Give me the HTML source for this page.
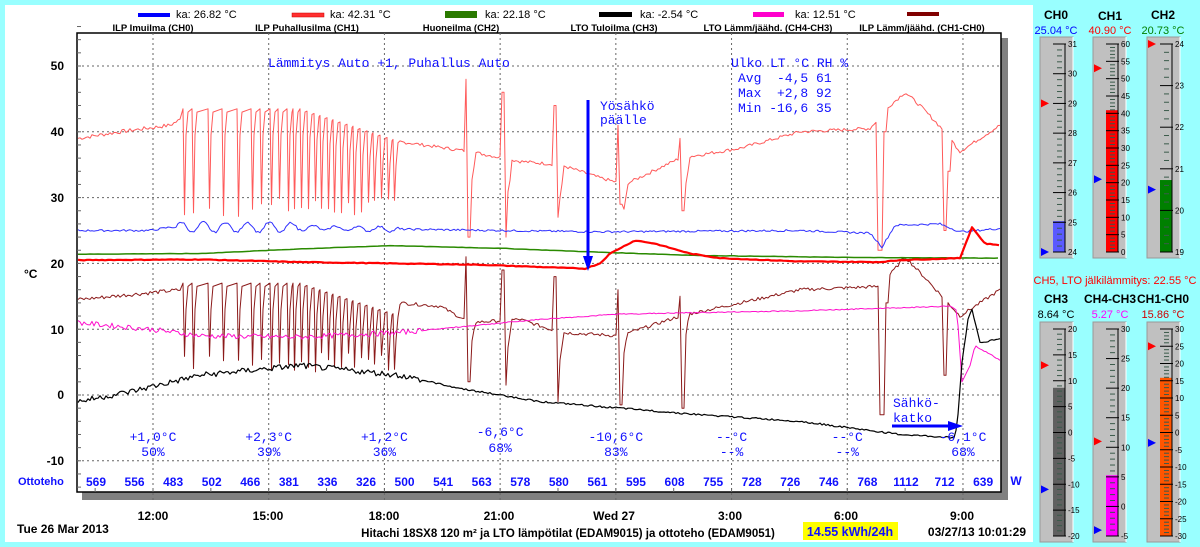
<!DOCTYPE html>
<html><head><meta charset="utf-8">
<style>
html,body{margin:0;padding:0;background:#99ffff;width:1200px;height:547px;overflow:hidden}
svg{display:block}
text{font-family:"Liberation Sans",Arial,sans-serif}
.m,.m text{font-family:"Liberation Mono","DejaVu Sans Mono",monospace;fill:#1010ff;font-size:13px}
</style></head><body>
<svg id="s" width="1200" height="547" xmlns="http://www.w3.org/2000/svg">
<rect x="0" y="0" width="1200" height="547" fill="#99ffff"/>
<rect x="5" y="5" width="1028" height="537" fill="#fff"/>
<rect x="1001" y="38" width="7" height="462" fill="#808080"/>
<rect x="82" y="492" width="926" height="8" fill="#808080"/>
<rect x="77" y="33" width="924" height="459" fill="#fff" stroke="#000" stroke-width="1.5"/>
<g id="grid"></g>
<g id="curves" fill="none"></g>
<g font-size="11">
<rect x="138" y="13" width="32" height="4" fill="#0000ff"/><text x="176" y="18">ka: 26.82 °C</text>
<rect x="292" y="13" width="32" height="4" fill="#ff3030" stroke="#c00" stroke-width="0.5"/><text x="330" y="18">ka: 42.31 °C</text>
<rect x="445" y="11" width="32" height="7" fill="#2a7a00"/><text x="485" y="18">ka: 22.18 °C</text>
<rect x="599" y="12" width="33" height="5" fill="#000"/><text x="640" y="18">ka: -2.54 °C</text>
<rect x="753" y="12" width="31" height="5" fill="#ff00cc"/><text x="795" y="18">ka: 12.51 °C</text>
<rect x="907" y="12" width="32" height="4" fill="#800000"/>
</g>
<g font-size="9.5" font-weight="bold" text-anchor="middle">
<text x="153" y="31">ILP Imuilma (CH0)</text>
<text x="307" y="31">ILP Puhallusilma (CH1)</text>
<text x="461" y="31">Huoneilma (CH2)</text>
<text x="614" y="31">LTO Tuloilma (CH3)</text>
<text x="768" y="31">LTO Lämm/jäähd. (CH4-CH3)</text>
<text x="922" y="31">ILP Lämm/jäähd. (CH1-CH0)</text>
</g>
<g font-size="12" font-weight="bold" text-anchor="end">
<text x="64" y="70">50</text><text x="64" y="136">40</text><text x="64" y="202">30</text>
<text x="64" y="268">20</text><text x="64" y="334">10</text><text x="64" y="399">0</text><text x="64" y="465">-10</text>
</g>
<text x="24" y="278" font-size="12" font-weight="bold">°C</text>
<text class="m" x="268" y="67">Lämmitys Auto +1, Puhallus Auto</text>
<text class="m" x="731" y="67" font-size="12">Ulko LT °C RH %</text>
<text class="m" x="738" y="82" font-size="12" xml:space="preserve">Avg  -4,5 61</text>
<text class="m" x="738" y="97" font-size="12" xml:space="preserve">Max  +2,8 92</text>
<text class="m" x="738" y="112" font-size="12" xml:space="preserve">Min -16,6 35</text>
<text class="m" x="600" y="110" font-size="12">Yösähkö</text>
<text class="m" x="600" y="124" font-size="12">päälle</text>
<line x1="588" y1="100" x2="588" y2="258" stroke="#0000ff" stroke-width="3"/>
<polygon points="583,256 593,256 588,271" fill="#0000ff"/>
<text class="m" x="893" y="407" font-size="12">Sähkö-</text>
<text class="m" x="893" y="422" font-size="12">katko</text>
<line x1="892" y1="426" x2="950" y2="426" stroke="#0000ff" stroke-width="3"/>
<polygon points="948,421 948,431 963,426" fill="#0000ff"/>
<g id="out" class="m" text-anchor="middle"></g>
<g id="ott" font-size="12" font-weight="bold" fill="#1010ff" text-anchor="middle"></g>
<text x="18" y="485" font-size="11" font-weight="bold" fill="#1010ff">Ottoteho</text>
<text x="1016" y="485" font-size="12" font-weight="bold" fill="#1010ff" text-anchor="middle">W</text>
<g font-size="12" font-weight="bold" text-anchor="middle">
<text x="153" y="520">12:00</text><text x="268" y="520">15:00</text><text x="384" y="520">18:00</text>
<text x="499" y="520">21:00</text><text x="614" y="520">Wed 27</text><text x="730" y="520">3:00</text>
<text x="846" y="520">6:00</text><text x="962" y="520">9:00</text>
<text x="568" y="537" font-size="11.5">Hitachi 18SX8 120 m² ja LTO lämpötilat (EDAM9015) ja ottoteho (EDAM9051)</text>
</g>
<text x="17" y="533" font-size="12" font-weight="bold">Tue 26 Mar 2013</text>
<rect x="803" y="522" width="95" height="18" fill="#ffff00"/>
<text x="850" y="536" font-size="12.5" font-weight="bold" fill="#1010ff" text-anchor="middle">14.55 kWh/24h</text>
<text x="1026" y="536" font-size="12" font-weight="bold" text-anchor="end">03/27/13 10:01:29</text>
<g font-size="12" font-weight="bold" text-anchor="middle">
<text x="1056" y="19">CH0</text><text x="1110" y="20">CH1</text><text x="1163" y="19">CH2</text>
<text x="1056" y="303">CH3</text><text x="1110" y="303">CH4-CH3</text><text x="1163" y="303">CH1-CH0</text>
</g>
<g font-size="11" text-anchor="middle">
<text x="1056" y="34" fill="#0000ff">25.04 °C</text><text x="1110" y="34" fill="#ff0000">40.90 °C</text><text x="1163" y="34" fill="#008000">20.73 °C</text>
<text x="1056" y="318">8.64 °C</text><text x="1110" y="318" fill="#ff00ff">5.27 °C</text><text x="1163" y="318" fill="#d00000">15.86 °C</text>
<text x="1115" y="284" fill="#ff0000" font-size="11">CH5, LTO jälkilämmitys: 22.55 °C</text>
</g>
<g id="th"></g>
</svg>
<script>
var NS="http://www.w3.org/2000/svg";
function el(p,t,a,txt){var e=document.createElementNS(NS,t);for(var k in a)e.setAttribute(k,a[k]);if(txt!=null)e.textContent=txt;p.appendChild(e);return e;}
var X=function(h){return 153+h*38.57};
var Y=function(v){return 395-6.58*v};
var g=document.getElementById('grid');
for(var v=-10;v<=50;v+=10) el(g,'line',{x1:77,x2:1001,y1:Y(v),y2:Y(v),stroke:'#666','stroke-dasharray':'2,3','stroke-width':1});
for(var h=0;h<=21;h+=3) el(g,'line',{x1:X(h),x2:X(h),y1:33,y2:500,stroke:'#666','stroke-dasharray':'2,3','stroke-width':1});
for(var v=-14;v<=56;v+=2) el(g,'line',{x1:77,x2:81,y1:Y(v),y2:Y(v),stroke:'#666'});
for(var h=-1.5;h<=22;h+=1.5) el(g,'line',{x1:X(h),x2:X(h),y1:488,y2:492,stroke:'#666'});
var seed=7;function rnd(){seed=(seed*9301+49297)%233280;return seed/233280;}
function interp(kp,x){for(var i=0;i<kp.length-1;i++){if(x>=kp[i][0]&&x<=kp[i+1][0]){var t=(x-kp[i][0])/(kp[i+1][0]-kp[i][0]);return kp[i][1]+t*(kp[i+1][1]-kp[i][1]);}}return kp[kp.length-1][1];}
function series(kp,noise,step,events){var pts=[];for(var x=78;x<=1000;x+=step){var v=interp(kp,x)+(rnd()-0.5)*noise;if(events)v=events(x,v);pts.push(x.toFixed(1)+','+Y(v).toFixed(1));}return pts.join(' ');}
var C=document.getElementById('curves');
function draw(pts,col,w){el(C,'polyline',{points:pts,stroke:col,'stroke-width':w,fill:'none','stroke-linejoin':'round'});}
var sp=[183,192,208,222,237,251,260,270,278,287,293,300,307,314,320,327,333,340,347,353,360,367,373,380,387,393];
function oscPts(base,peakF,trough){var pts=[];var x;var kp=base;
 for(x=78;x<182;x+=2){pts.push([x,interp(kp,x)+(rnd()-.5)*0.6]);}
 for(var i=0;i<sp.length;i++){var s=sp[i],n=sp[i+1]||400;var pk=peakF(s);pts.push([s,pk]);pts.push([s+1.5,trough+(rnd()-.5)*3]);pts.push([s+3,pk-4]);pts.push([Math.min(s+5,n-1),pk-0.5]);}
 for(x=400;x<=1000;x+=2){pts.push([x,interp(kp,x)+(rnd()-.5)*0.5]);}
 return pts;}
function toStr(pts,ev){return pts.map(function(p){var v=ev?ev(p[0],p[1]):p[1];return p[0].toFixed(1)+','+Y(v).toFixed(1)}).join(' ');}
var redBase=[[78,39],[120,40],[170,41],[182,42],[400,38.5],[470,37],[520,35.5],[560,35],[600,33],[625,32],[680,36],[740,37.5],[800,40],[870,40.5],[890,44],[905,46],[920,44],[945,40],[960,37],[1000,41]];
var redEv=function(x,v){var S=[[468,48,24],[505,46,24],[557,44,27],[620,41,29],[682,39,28]];
 for(var i=0;i<S.length;i++){var s=S[i];if(x>=s[0]-3&&x<s[0])return s[1];if(x>=s[0]&&x<s[0]+3)return s[2];if(x>=s[0]+3&&x<s[0]+7)return v-5+(x-s[0]-3);}
 if(x>=878&&x<884)return 22;if(x>=884&&x<888)return 40;if(x>=943&&x<948)return 25;if(x>=948&&x<952)return 34;return v;};
draw(toStr(oscPts(redBase,function(s){return s<300?43.5:43.5-(s-300)/100*5},28.5),redEv),'#ff5a5a',1);
var drBase=[[78,14.5],[182,16],[400,14],[440,13.5],[470,11],[520,11.5],[560,9.5],[620,9],[680,12],[740,14],[800,16],[880,16.5],[905,21],[930,17],[960,12],[1000,16]];
var drEv=function(x,v){var S=[[468,21,2],[505,19,1.5],[557,18,-1],[620,16,-1.5],[682,15,-2]];
 for(var i=0;i<S.length;i++){var s=S[i];if(x>=s[0]-3&&x<s[0])return s[1];if(x>=s[0]&&x<s[0]+3)return s[2];if(x>=s[0]+3&&x<s[0]+7)return v-4+(x-s[0]-3);}
 if(x>=880&&x<886)return -3;if(x>=886&&x<890)return 14;if(x>=943&&x<948)return 3;return v;};
draw(toStr(oscPts(drBase,function(s){return s<300?17:17-(s-300)/100*5},5),drEv),'#8b1a1a',1);
draw(series([[78,25],[150,25],[170,25.5],[260,25.5],[400,25.2],[600,24.8],[800,25],[870,24.6],[882,22.5],[895,25.8],[940,26],[960,24.8],[1000,25.3]],0.3,2,function(x,v){if(x>175&&x<400)return v+Math.sin(x/3.5)*0.6*(x<300?1.3:0.6);return v;}),'#3030ff',1);
draw(series([[78,21.4],[200,21.5],[300,22.2],[390,22.7],[500,22.3],[600,21.7],[700,21.2],[850,20.9],[1000,20.8]],0.05,4),'#2a8a00',1.5);
draw(series([[78,20.5],[200,20.6],[300,20.2],[480,19.8],[585,19.2],[600,20],[610,21.5],[635,23.5],[655,23],[690,21.5],[720,20.8],[800,20.3],[880,20.2],[900,20.5],[960,20.8],[972,25.5],[985,23],[1000,22.8]],0.1,3),'#ff0000',2.2);
draw(series([[78,11],[150,10],[200,9],[300,8.8],[400,9.5],[470,10.5],[540,11.5],[620,12.3],[800,12.8],[950,13.5],[957,12.8],[962,2],[970,4.5],[975,7.5],[1000,5.3]],0.8,2,function(x,v){return x>420?interp([[78,11],[150,10],[200,9],[300,8.8],[400,9.5],[470,10.5],[540,11.5],[620,12.3],[800,12.8],[950,13.5],[957,12.8],[962,2],[970,4.5],[975,7.5],[1000,5.3]],x)+(rnd()-.5)*0.15:v;}),'#ff10cc',1);
var bk=[[78,-1],[130,0.5],[200,3],[300,4.5],[400,3],[460,1],[540,-1],[620,-2],[700,-3],[800,-4],[850,-5],[900,-6],[955,-6.5],[958,-3],[962,5],[968,11.5],[972,13],[980,8],[1000,8.5]];
draw(series(bk,0.9,2,function(x,v){return x>420?interp(bk,x)+(rnd()-.5)*0.25:v;}),'#000',1.2);
var out=[["+1,0°C","50%"],["+2,3°C","39%"],["+1,2°C","36%"],["-6,6°C","68%"],["-10,6°C","83%"],["--°C","--%"],["--°C","--%"],["-6,1°C","68%"]];
var O=document.getElementById('out');
out.forEach(function(o,i){var x=X(i*3);el(O,'text',{x:x,y:i==3?436:441,'font-size':12},o[0]);el(O,'text',{x:x,y:i==3?452:456,'font-size':12},o[1]);});
var ot=[569,556,483,502,466,381,336,326,500,541,563,578,580,561,595,608,755,728,726,746,768,1112,712,639];
var T=document.getElementById('ott');
ot.forEach(function(v,i){el(T,'text',{x:96+i*38.57,y:486},v);});
var th=document.getElementById('th');
function thermo(bx,by,bh,lo,hi,step,minor,val,col,red,blue){
 el(th,'rect',{x:bx,y:by,width:33,height:bh,fill:'#c0c0c0',stroke:'#999'});
 el(th,'line',{x1:bx+33,y1:by,x2:bx+33,y2:by+bh,stroke:'#fff'});
 var t=by+7,b=by+bh-6,ax=bx+25;
 var yv=function(v){return b-(v-lo)/(hi-lo)*(b-t)};
 el(th,'rect',{x:bx+13,y:yv(val),width:12,height:b-yv(val),fill:col});
 el(th,'line',{x1:ax,y1:t,x2:ax,y2:b,stroke:'#000'});
 for(var v=lo;v<=hi+1e-6;v+=minor){var maj=Math.abs((v-lo)/step-Math.round((v-lo)/step))<1e-6;
  el(th,'line',{x1:maj?ax-12:ax-8,x2:maj?ax+1:ax-3,y1:yv(v),y2:yv(v),stroke:maj?'#000':'#3a5a4a','stroke-width':1});
  if(maj)el(th,'text',{x:ax+3,y:yv(v)+3,'font-size':8},String(Math.round(v)));}
 var tri=function(v,c){var y=yv(v);el(th,'polygon',{points:(bx+1)+','+(y-4)+' '+(bx+1)+','+(y+4)+' '+(bx+9)+','+y,fill:c});};
 tri(red,'#ff0000');tri(blue,'#0000ff');
}
thermo(1040,37,221,24,31,1,0.2,25.04,'#5a5aff',29,24);
thermo(1093,37,221,0,60,5,1,40.9,'#ff0000',53,21);
thermo(1147,37,221,19,24,1,0.2,20.73,'#008000',24,20.5);
thermo(1040,322,220,-20,20,5,1,8.64,'#606060',13,-11);
thermo(1093,322,220,-5,30,5,1,5.27,'#ff00ff',11,-4);
thermo(1147,322,220,-30,30,5,1,15.86,'#ff5500',25,-3);
</script>
</body></html>
